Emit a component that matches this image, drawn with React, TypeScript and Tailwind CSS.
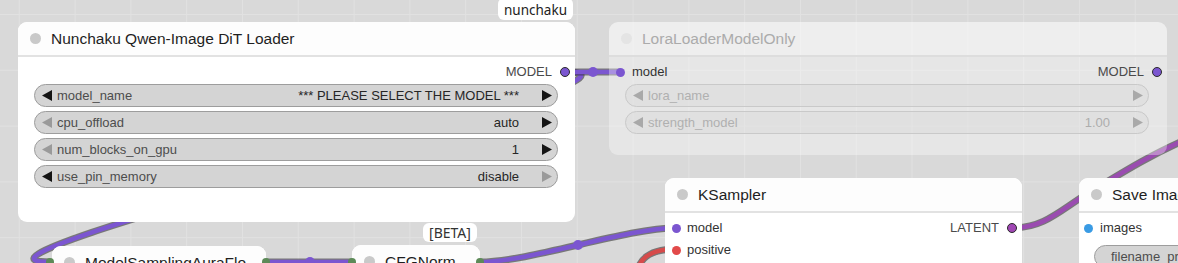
import React from "react";

type WidgetProps = {
  label: string;
  value: string;
  left?: boolean;
  right?: boolean;
  faded?: boolean;
};

function Arrow({ dir, color }: { dir: "l" | "r"; color: string }) {
  return (
    <svg width="10" height="11" viewBox="0 0 10 11" className="shrink-0">
      <polygon points={dir === "l" ? "10,0 10,11 0,5.5" : "0,0 0,11 10,5.5"} fill={color} />
    </svg>
  );
}

function Widget({ label, value, left = true, right = true, faded = false }: WidgetProps) {
  const on = faded ? "#a9a9a9" : "#141414";
  const off = faded ? "#a9a9a9" : "#9a9a9a";
  return (
    <div
      className={`flex h-[23px] items-center rounded-full border pl-[7px] pr-[5px] text-[13px] leading-none ${
        faded ? "border-[#c9c9c9] bg-[rgba(200,200,200,0.2)]" : "border-[#9d9d9d] bg-[#d4d4d4]"
      }`}
    >
      <Arrow dir="l" color={left ? on : off} />
      <span className={`ml-[5px] ${faded ? "text-[#b0b0b0]" : "text-[#4d4d4d]"}`}>{label}</span>
      <span className={`ml-auto mr-[23px] ${faded ? "text-[#adadad]" : "text-[#262626]"}`}>{value}</span>
      <Arrow dir="r" color={right ? on : off} />
    </div>
  );
}

function Title({ text, faded = false }: { text: string; faded?: boolean }) {
  return (
    <div
      className={`flex h-[35px] shrink-0 items-center rounded-t-[9px] border-b-2 pl-[12px] ${
        faded ? "border-[#dddddd] bg-[rgba(255,255,255,0.55)]" : "border-[#e2e2e2] bg-[#fdfdfd]"
      }`}
    >
      <span className={`h-[11px] w-[11px] shrink-0 rounded-full ${faded ? "bg-[#e4e4e4]" : "bg-[#c9c9c9]"}`} />
      <span className={`ml-[10px] whitespace-nowrap text-[15.5px] ${faded ? "text-[#ababab]" : "text-[#1f1f1f]"}`}>
        {text}
      </span>
    </div>
  );
}

function OutDot({ color }: { color: string }) {
  return <span className="ml-[8px] h-[10px] w-[10px] shrink-0 rounded-full border border-[#2b2b2b]" style={{ background: color }} />;
}

function InDot({ color }: { color: string }) {
  return <span className="h-[9px] w-[9px] shrink-0 rounded-full" style={{ background: color }} />;
}

const PURPLE = "#7b56d0";

function Link({ d, color }: { d: string; color: string }) {
  return (
    <g fill="none">
      <path d={d} stroke="rgba(40,40,40,0.55)" strokeWidth={7} />
      <path d={d} stroke={color} strokeWidth={4.5} />
    </g>
  );
}

function Links() {
  return (
    <svg className="absolute inset-0" width="1178" height="263" viewBox="0 0 1178 263">
      <Link d="M565,72 C702,72 -87,262 50,262" color={PURPLE} />
      <Link d="M565,72 L620,72" color={PURPLE} />
      <circle cx="593" cy="72" r="5" fill={PURPLE} />
      <Link d="M266,262 L352,262" color={PURPLE} />
      <circle cx="310" cy="262" r="5" fill={PURPLE} />
      <Link d="M480,262 C530,262 626,228 676,228" color={PURPLE} />
      <circle cx="578" cy="245" r="5" fill={PURPLE} />
      <Link d="M636,282 C636,258 650,249 676,249" color="#d64b4b" />
      <Link d="M1012,228 C1045,228 1060,210 1090,192 S1150,155 1185,140" color="#9a4cb0" />
    </svg>
  );
}

export default function App() {
  return (
    <div className="relative h-[263px] w-[1178px] overflow-hidden bg-[#d9d9d9] bg-[linear-gradient(to_right,#e1e1e1_1px,transparent_1px),linear-gradient(to_bottom,#e1e1e1_1px,transparent_1px)] bg-size-[55.8px_55.8px] bg-position-[18.8px_14px] font-['Liberation_Sans',Arial,sans-serif]">
      <Links />

      {/* nunchaku loader */}
      <div className="absolute left-[498px] top-[-2px] flex h-[22px] w-[75px] items-center justify-center rounded-[6px] bg-white pt-[2px] font-['Noto_Sans',sans-serif] text-[13.5px] text-[#222]">
        nunchaku
      </div>
      <div className="absolute left-[18px] top-[22px] flex h-[200px] w-[557px] flex-col rounded-[9px] bg-white">
        <Title text="Nunchaku Qwen-Image DiT Loader" />
        <div className="mt-[4px] flex h-[22px] items-center justify-end pr-[5px] text-[13px] text-[#4a4a4a]">
          MODEL
          <OutDot color={PURPLE} />
        </div>
        <div className="mt-px flex flex-col gap-[4px] pl-[16px] pr-[17px]">
          <Widget label="model_name" value="*** PLEASE SELECT THE MODEL ***" />
          <Widget label="cpu_offload" value="auto" left={false} />
          <Widget label="num_blocks_on_gpu" value="1" left={false} />
          <Widget label="use_pin_memory" value="disable" right={false} />
        </div>
      </div>

      {/* lora loader (muted) */}
      <div className="absolute left-[609px] top-[22px] flex h-[133px] w-[558px] flex-col">
        <Title text="LoraLoaderModelOnly" faded />
        <div className="flex flex-1 flex-col rounded-b-[9px] bg-[rgba(255,255,255,0.35)]">
          <div className="mt-[4px] flex h-[22px] items-center pl-[7px] pr-[5px] text-[13px]">
            <InDot color={PURPLE} />
            <span className="ml-[7px] text-[#333]">model</span>
            <span className="ml-auto text-[#4a4a4a]">MODEL</span>
            <OutDot color={PURPLE} />
          </div>
          <div className="mt-px flex flex-col gap-[4px] pl-[16px] pr-[18px]">
            <Widget label="lora_name" value="" faded />
            <Widget label="strength_model" value="1.00" faded />
          </div>
        </div>
      </div>

      {/* KSampler */}
      <div className="absolute left-[665px] top-[178px] flex h-[140px] w-[357px] flex-col rounded-[9px] bg-white">
        <Title text="KSampler" />
        <div className="mt-[4px] flex h-[22px] items-center pl-[7px] pr-[5px] text-[13px]">
          <InDot color={PURPLE} />
          <span className="ml-[6px] text-[#333]">model</span>
          <span className="ml-auto text-[#4a4a4a]">LATENT</span>
          <OutDot color="#a047b4" />
        </div>
        <div className="flex h-[22px] items-center pl-[7px] text-[13px]">
          <InDot color="#e24a4a" />
          <span className="ml-[6px] text-[#333]">positive</span>
        </div>
      </div>

      {/* Save Image */}
      <div className="absolute left-[1079px] top-[178px] flex h-[140px] w-[300px] flex-col rounded-[9px] bg-white">
        <Title text="Save Image" />
        <div className="mt-[4px] flex h-[22px] items-center pl-[5px] text-[13px]">
          <InDot color="#3a9be4" />
          <span className="ml-[7px] text-[#333]">images</span>
        </div>
        <div className="ml-[15px] mt-[6px] flex h-[23px] items-center rounded-full border border-[#9d9d9d] bg-[#d4d4d4] pl-[16px] text-[13px] text-[#4d4d4d]">
          filename_prefix
        </div>
      </div>

      {/* ModelSamplingAuraFlow */}
      <div className="absolute left-[52px] top-[246px] flex h-[60px] w-[214px] flex-col rounded-[9px] bg-white">
        <Title text="ModelSamplingAuraFlo…" />
      </div>

      {/* CFGNorm */}
      <div className="absolute left-[423px] top-[223px] flex h-[19px] w-[54px] items-center justify-center rounded-[6px] bg-white font-['Noto_Sans',sans-serif] text-[14px] text-[#333]">
        [BETA]
      </div>
      <div className="absolute left-[352px] top-[245px] flex h-[60px] w-[128px] flex-col rounded-[9px] bg-white">
        <Title text="CFGNorm" />
      </div>

      <svg className="absolute inset-0" width="1178" height="263" viewBox="0 0 1178 263">
        <circle cx="50" cy="262" r="4" fill="#5d8a58" />
        <circle cx="266" cy="262" r="4" fill="#5d8a58" />
        <circle cx="352" cy="262" r="4" fill="#5d8a58" />
        <circle cx="480" cy="262" r="4" fill="#5d8a58" />
      </svg>
    </div>
  );
}
